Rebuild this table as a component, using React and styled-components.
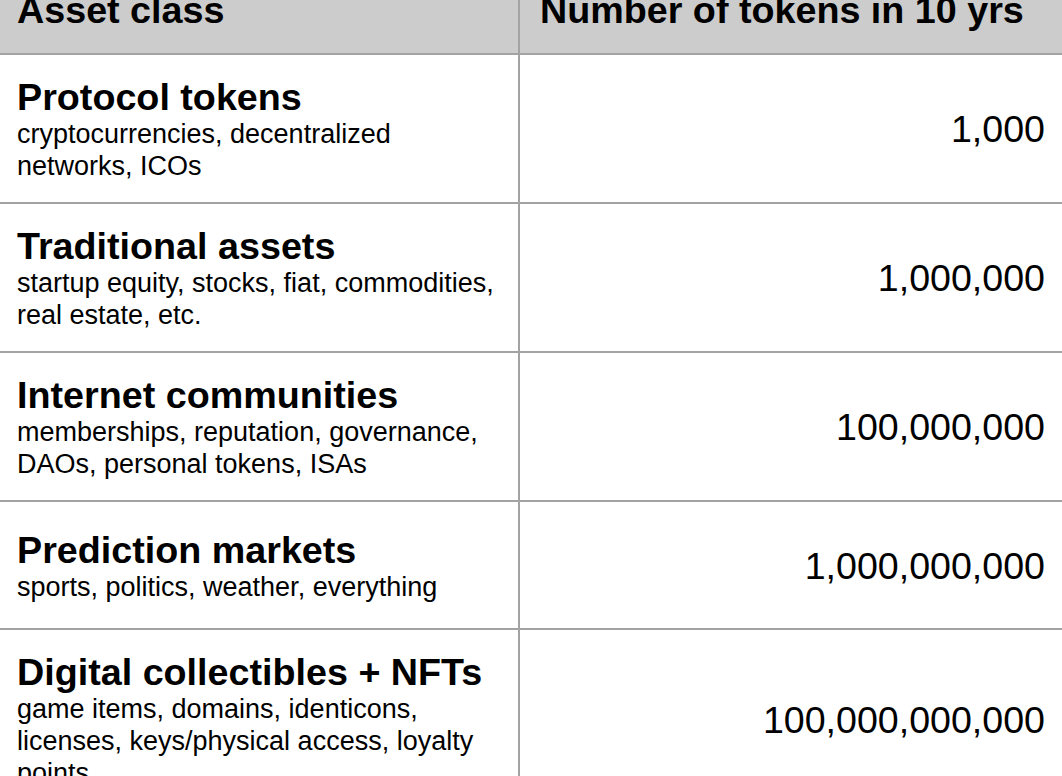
import React from "react";
import styled, { createGlobalStyle } from "styled-components";

const Global = createGlobalStyle`
  html, body { margin: 0; padding: 0; background: #ffffff; }
  body { font-family: "Liberation Sans", Arial, sans-serif; color: #000; }
`;

const Viewport = styled.div`
  width: 1062px;
  height: 776px;
  overflow: hidden;
  background: #fff;
`;

const Table = styled.div`
  display: grid;
  grid-template-columns: 518px 544px;
  margin-top: -34px;
`;

const Cell = styled.div`
  box-sizing: border-box;
  display: flex;
  flex-direction: column;
  justify-content: center;
  min-height: ${(p) => (p.$header ? "89px" : "128px")};
  padding: 21px 17px 20px;
  background: ${(p) => (p.$header ? "#cccccc" : "#ffffff")};
  border-bottom: 2px solid #a3a3a3;
  border-left: ${(p) => (p.$right ? "2px solid #a3a3a3" : "none")};
  padding-left: ${(p) => (p.$right ? "20px" : "17px")};
  align-items: ${(p) => (p.$num ? "flex-end" : "flex-start")};
`;

const HeadText = styled.div`
  font-size: 37.7px;
  font-weight: 700;
  line-height: 40px;
  white-space: nowrap;
`;

const Title = styled.div`
  font-size: 37.7px;
  font-weight: 700;
  line-height: 42px;
  white-space: nowrap;
`;

const Desc = styled.div`
  font-size: 27px;
  line-height: 32px;
  max-width: 490px;
`;

const Num = styled.div`
  font-size: 37.6px;
  line-height: 40px;
  white-space: nowrap;
`;

const rows = [
  {
    title: "Protocol tokens",
    desc: ["cryptocurrencies, decentralized", "networks, ICOs"],
    num: "1,000",
  },
  {
    title: "Traditional assets",
    desc: ["startup equity, stocks, fiat, commodities,", "real estate, etc."],
    num: "1,000,000",
  },
  {
    title: "Internet communities",
    desc: ["memberships, reputation, governance,", "DAOs, personal tokens, ISAs"],
    num: "100,000,000",
  },
  {
    title: "Prediction markets",
    desc: ["sports, politics, weather, everything"],
    num: "1,000,000,000",
  },
  {
    title: "Digital collectibles + NFTs",
    desc: ["game items, domains, identicons,", "licenses, keys/physical access, loyalty", "points"],
    num: "100,000,000,000",
  },
];

export default function App() {
  return (
    <Viewport>
      <Global />
      <Table>
        <Cell $header>
          <HeadText>Asset class</HeadText>
        </Cell>
        <Cell $header $right>
          <HeadText>Number of tokens in 10 yrs</HeadText>
        </Cell>
        {rows.map((r) => (
          <React.Fragment key={r.title}>
            <Cell>
              <Title>{r.title}</Title>
              {r.desc.map((d) => (
                <Desc key={d}>{d}</Desc>
              ))}
            </Cell>
            <Cell $right $num>
              <Num>{r.num}</Num>
            </Cell>
          </React.Fragment>
        ))}
      </Table>
    </Viewport>
  );
}
